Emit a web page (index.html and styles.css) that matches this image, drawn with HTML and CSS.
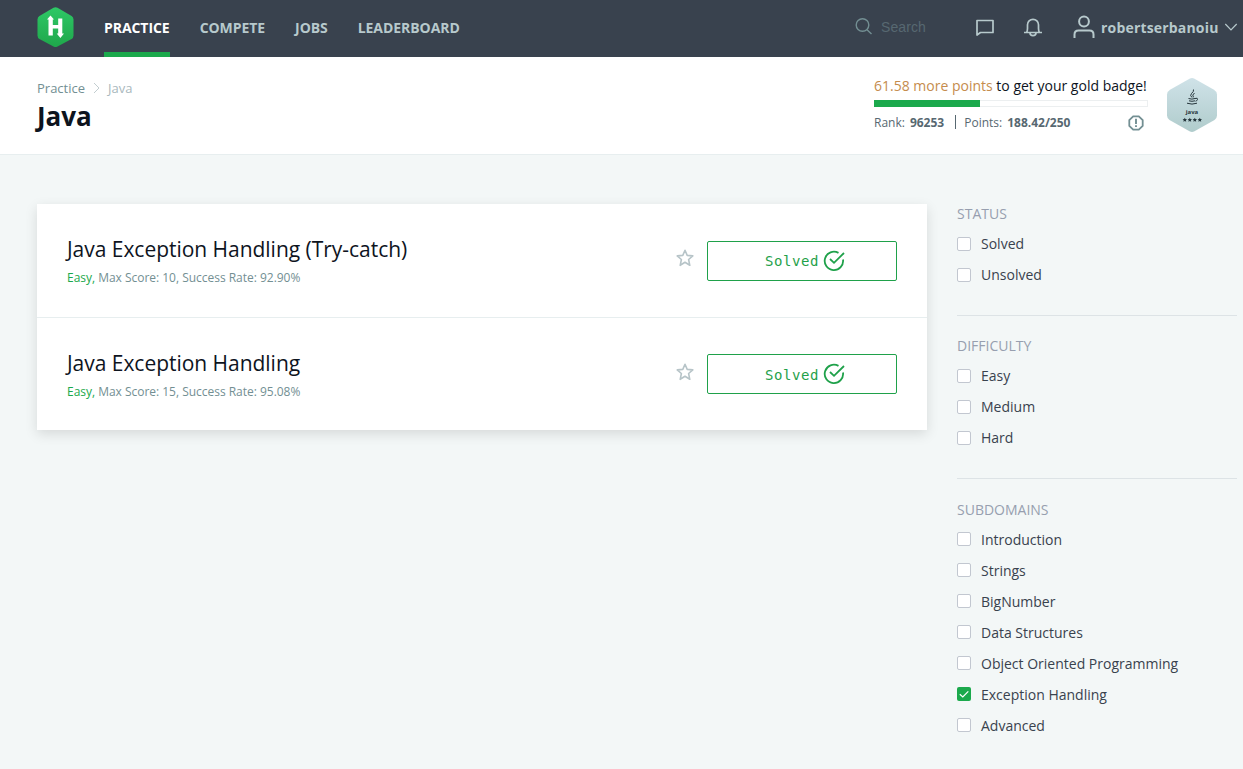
FILE: index.html
```
<!DOCTYPE html>
<html lang="en">
<head>
<meta charset="utf-8">
<title>Java | Practice</title>
<link rel="stylesheet" href="styles.css">
</head>
<body>
<header class="topbar">
  <svg class="logo" width="37" height="41" viewBox="0 0 37 41">
    <defs><linearGradient id="lg" x1="0" y1="0" x2="0" y2="1"><stop offset="0" stop-color="#2ec866"/><stop offset="1" stop-color="#1fa74b"/></linearGradient></defs>
    <path fill="url(#lg)" d="M16.5.8q2-1 4 0L34.600 9Q36.500 10.200 36.500 12.500V28.500Q36.500 30.800 34.600 32L20.500 39.500q-2 1-4 0L2.400 32Q.5 30.800.5 28.500V12.500Q.5 10.200 2.400 9z"/>
    <path fill="#fff" d="M13.500 8.500L17 12.500H15.800V18H21.200V11.500H25.300V26.500H27L23.400 31L19.700 26.500H21.200V21.500H15.800V28.500H11.500V12.500H10z"/>
  </svg>
  <nav class="nav">
    <a class="nav-link active">PRACTICE</a>
    <a class="nav-link">COMPETE</a>
    <a class="nav-link">JOBS</a>
    <a class="nav-link">LEADERBOARD</a>
  </nav>
  <div class="search">
    <svg width="18" height="18" viewBox="0 0 18 18" fill="none" stroke="#738f93" stroke-width="1.400"><circle cx="7.500" cy="7" r="6.300"/><path d="M12 11.700l4.500 4.300"/></svg>
    <span>Search</span>
  </div>
  <svg class="chat" width="18" height="18" viewBox="0 0 18 18" fill="none" stroke="#b7c9cc" stroke-width="1.700" stroke-linejoin="round"><path d="M1 17V2.500H17V14.500H4.500z"/></svg>
  <svg class="bell" width="20" height="19" viewBox="0 0 20 19" fill="none" stroke="#b7c9cc" stroke-width="1.700"><path d="M1 14.500H19M3.500 14.500Q4.500 13 4.500 10.500V6.800A5.500 5.500 0 0 1 15.500 6.800V10.500Q15.500 13 16.500 14.500M7 15A3 2.600 0 0 0 13 15"/></svg>
  <div class="user">
    <svg width="22" height="24" viewBox="0 0 22 24" fill="none" stroke="#b7c9cc" stroke-width="2"><circle cx="11" cy="6.500" r="4.900"/><path d="M1.500 23V19.500Q1.500 15.500 5.500 15.500H16.500Q20.500 15.500 20.500 19.500V23"/></svg>
    <span>robertserbanoiu</span>
    <svg class="caret" width="14" height="9" viewBox="0 0 14 9" fill="none" stroke="#b7c9cc" stroke-width="1.200"><path d="M1.300 1L7 7L12.700 1"/></svg>
  </div>
</header>

<section class="page-head">
  <div class="heading">
    <div class="crumbs">
      <span class="crumb">Practice</span>
      <svg width="7" height="12" viewBox="0 0 7 12" fill="none" stroke="#c2cdd0"><path d="M1 1L6 6L1 11"/></svg>
      <span>Java</span>
    </div>
    <h1>Java</h1>
  </div>
  <div class="progress">
    <div class="goal"><span>61.58 more points</span> to get your gold badge!</div>
    <div class="bar"><div class="fill"></div></div>
    <div class="stats">
      <span>Rank:</span><b>96253</b><i class="pipe"></i><span>Points:</span><b>188.42/250</b>
      <svg class="info" width="16" height="16" viewBox="0 0 16 16" fill="none" stroke="#738f93" stroke-width="1.800"><path d="M5.200 1.300H10.800L14.700 5.200V10.800L10.800 14.700H5.200L1.300 10.800V5.200z"/><path stroke-width="1.900" d="M8 3.800V9M8 10.300V12.100"/></svg>
    </div>
  </div>
  <svg class="badge" width="52" height="56" viewBox="0 0 52 56">
    <defs><linearGradient id="bg" x1="0" y1="0" x2="0" y2="1"><stop offset="0" stop-color="#cfe2e8"/><stop offset="1" stop-color="#b0cccc"/></linearGradient></defs>
    <path fill="url(#bg)" d="M23.500 1.700Q26 .3 28.500 1.700L48 12.700Q51 14.500 51 17.500V38.500Q51 41.500 48.500 43L28.500 54.300Q26 55.700 23.500 54.300L3.500 43Q1 41.500 1 38.500V17.500Q1 14.500 4 12.700z"/>
    <g fill="none" stroke="#26363c" stroke-width="1"><path d="M27.500 12.500Q28 14.500 25.500 16.500Q23.500 18.500 26 20.500M28.500 16Q25.500 18 27.500 20.300M22.500 21.500Q26 22.700 29 21.500Q32 20.500 31.500 22.500Q31 24 29.500 24.200M23 23.800Q26 24.800 29 23.800M21 26.200Q26 28 31 26.200"/></g>
    <text x="26" y="37" text-anchor="middle" class="badge-name">java</text>
    <g fill="#26363c"><path id="s" d="M18.800 40.700l.7 1.300 1.500.2-1.100 1 .3 1.600-1.400-.8-1.400.8.300-1.600-1.100-1 1.500-.2z"/><use href="#s" x="5"/><use href="#s" x="10"/><use href="#s" x="15"/></g>
  </svg>
</section>

<main class="content">
  <div class="card">
    <article class="challenge">
      <div class="info-col">
        <h2>Java Exception Handling (Try-catch)</h2>
        <p><em>Easy,</em> Max Score: 10, Success Rate: 92.90%</p>
      </div>
      <svg class="star" width="18" height="18" viewBox="0 0 18 18" fill="none" stroke="#b7c4c8" stroke-width="1.600" stroke-linejoin="round"><path d="M9 1.300L11.200 6.400L16.800 6.900L12.600 10.500L13.800 16.300L9 13.300L4.200 16.300L5.400 10.500L1.200 6.900L6.800 6.400z"/></svg>
      <div class="btn"><span>Solved</span><svg width="22" height="22" viewBox="0 0 22 22" fill="none" stroke="#1fa14a" stroke-width="1.800"><path d="M15.500 2.900A9.200 9.200 0 1 0 20 9.500M7 9L11 12.800L21 3"/></svg></div>
    </article>
    <article class="challenge">
      <div class="info-col">
        <h2>Java Exception Handling</h2>
        <p><em>Easy,</em> Max Score: 15, Success Rate: 95.08%</p>
      </div>
      <svg class="star" width="18" height="18" viewBox="0 0 18 18" fill="none" stroke="#b7c4c8" stroke-width="1.600" stroke-linejoin="round"><path d="M9 1.300L11.200 6.400L16.800 6.900L12.600 10.500L13.800 16.300L9 13.300L4.200 16.300L5.400 10.500L1.200 6.900L6.800 6.400z"/></svg>
      <div class="btn"><span>Solved</span><svg width="22" height="22" viewBox="0 0 22 22" fill="none" stroke="#1fa14a" stroke-width="1.800"><path d="M15.500 2.900A9.200 9.200 0 1 0 20 9.500M7 9L11 12.800L21 3"/></svg></div>
    </article>
  </div>
  <aside class="filters">
    <section class="group">
      <h3>STATUS</h3>
      <label><i class="box"></i>Solved</label>
      <label><i class="box"></i>Unsolved</label>
    </section>
    <section class="group">
      <h3>DIFFICULTY</h3>
      <label><i class="box"></i>Easy</label>
      <label><i class="box"></i>Medium</label>
      <label><i class="box"></i>Hard</label>
    </section>
    <section class="group subdomains">
      <h3>SUBDOMAINS</h3>
      <label><i class="box"></i>Introduction</label>
      <label><i class="box"></i>Strings</label>
      <label><i class="box"></i>BigNumber</label>
      <label><i class="box"></i>Data Structures</label>
      <label><i class="box"></i>Object Oriented Programming</label>
      <label><i class="box checked"><svg width="14" height="14" viewBox="0 0 14 14" fill="none" stroke="#fff" stroke-width="1.200"><path d="M2.800 7.200L5.800 10L11.300 4.300"/></svg></i>Exception Handling</label>
      <label><i class="box"></i>Advanced</label>
    </section>
  </aside>
</main>
</body>
</html>
```
FILE: styles.css
```
* { box-sizing: border-box; }
body {
  margin: 0;
  height: 769px;
  overflow: hidden;
  background: #f3f7f7;
  font-family: "Open Sans", "Noto Sans", sans-serif;
  font-size: 14px;
  color: #39424e;
}
h1, h2, h3, p { margin: 0; }
svg { display: block; flex: none; }

.topbar {
  display: flex;
  height: 57px;
  padding-left: 37px;
  background: #39424e;
  color: #b7c9cc;
}
.logo { margin-top: 7px; }
.nav { display: flex; gap: 30px; margin-left: 30px; }
.nav-link {
  height: 57px;
  border-bottom: 5px solid transparent;
  font-weight: 700;
  letter-spacing: -.06px;
  line-height: 56px;
  white-space: nowrap;
}
.nav-link.active { color: #fff; border-color: #1ba94c; }
.search {
  display: flex;
  gap: 8px;
  width: 121px;
  margin: 18px 0 0 auto;
  font: 14px/19px "Liberation Sans", Arial, sans-serif;
  letter-spacing: .1px;
  color: #576871;
}
.chat { margin-top: 18px; }
.bell { margin: 18px 0 0 29px; }
.user {
  display: flex;
  width: 170px;
  margin-left: 30px;
  padding-top: 15px;
  font-weight: 700;
  letter-spacing: .18px;
  line-height: 26px;
}
.user span { margin-left: 6px; }
.caret { margin: 8px 0 0 5px; }

.page-head {
  display: flex;
  height: 98px;
  padding-left: 37px;
  background: #fff;
  border-bottom: 1px solid #e7eeef;
}
.heading { width: 837px; padding-top: 21px; }
.crumbs {
  display: flex;
  align-items: center;
  gap: 8px;
  height: 20px;
  font-size: 13px;
  color: #a9b8bd;
}
.crumb { color: #738f93; }
h1 { font-size: 26px; line-height: 36px; color: #0e141e; }
.progress { width: 274px; padding-top: 19px; }
.goal { line-height: 20px; color: #0e141e; white-space: nowrap; }
.goal span { color: #c58c4d; }
.bar { height: 7px; margin-top: 4px; border: 1px solid #eceff0; }
.fill { width: 106px; height: 7px; margin: -1px; background: #1ba94c; }
.stats {
  display: flex;
  align-items: center;
  height: 18px;
  margin-top: 6px;
  font-size: 12px;
  color: #576871;
}
.stats b { margin-left: 5px; }
.pipe { width: 1px; height: 14px; margin: 0 8px 0 11px; background: #576871; }
.info { margin: 1px 4px 0 auto; }
.badge { margin: 20px 0 0 18px; }
.badge-name { font-size: 6px; font-weight: 700; fill: #26363c; }

.content { display: flex; gap: 30px; padding: 49px 0 0 37px; }
.card {
  width: 890px;
  height: 226px;
  background: #fff;
  box-shadow: 0 4px 12px rgba(0, 0, 0, .12);
}
.challenge { display: flex; height: 113px; padding: 0 30px; }
.challenge + .challenge { border-top: 1px solid #e7eeef; }
.info-col { flex: 1; padding-top: 29px; }
h2 { font-size: 21px; font-weight: 400; letter-spacing: -.03px; line-height: 32px; color: #0e141e; }
.info-col p { font-size: 12px; letter-spacing: -.02px; line-height: 16px; margin-top: 5px; color: #738f93; }
.info-col em { font-style: normal; color: #1ba94c; }
.star { margin: 45px 13px 0 0; }
.btn {
  display: flex;
  align-items: center;
  justify-content: center;
  gap: 4px;
  width: 190px;
  height: 40px;
  margin-top: 37px;
  padding-left: 6px;
  border: 1px solid #1fa14a;
  border-radius: 2px;
  font-family: "DejaVu Sans Mono", monospace;
  font-size: 14px;
  letter-spacing: .57px;
  color: #1fa14a;
}
.btn svg { margin-bottom: 1px; }
.challenge + .challenge .btn { margin-top: 36px; padding-top: 1px; }

.filters { width: 280px; }
.group { padding-bottom: 25px; }
.group + .group { border-top: 1px solid #dde3e6; padding-top: 20px; }
.group + .subdomains { padding-top: 21px; }
h3 { height: 20px; font-size: 14px; font-weight: 400; line-height: 20px; color: #979faf; }
.group h3 { margin-bottom: 4px; }
.group label { display: flex; align-items: center; height: 31px; }
.box {
  width: 14px;
  height: 14px;
  margin-right: 10px;
  border: 1px solid #c2c7d0;
  border-radius: 2px;
  background: #fff;
}
.subdomains .box { margin-bottom: 2px; }
.box.checked { border: 0; background: #1ba94c; }
```
